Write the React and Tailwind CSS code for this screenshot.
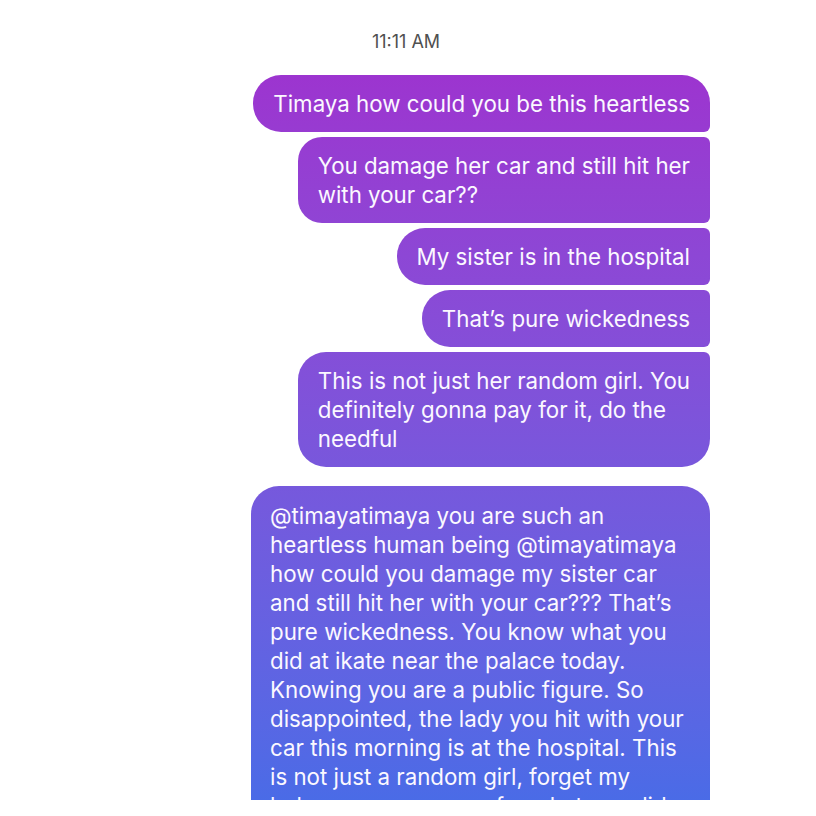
export default function App() {
  const bubble =
    "bg-fixed bg-linear-to-b from-[#a22acd] to-[#476ce7] text-[#fbf8ff] px-[20px] py-[14px] leading-[29px] whitespace-nowrap";

  return (
    <div
      className="w-[816px] h-[816px] bg-white overflow-hidden"
      style={{ fontFamily: "Inter, 'Noto Sans', sans-serif" }}
    >
      <div className="h-[800px] overflow-hidden">
        <div className="pt-[31px] pr-[4px] text-center text-[18px] leading-[22px] text-[#505050]">
          11:11 AM
        </div>

        <div className="flex flex-col items-end gap-[5px] pr-[106px] mt-[22px] text-[22.3px]">
          <div className={bubble + " rounded-[28px] rounded-br-[6px]"}>
            Timaya how could you be this heartless
          </div>
          <div className={bubble + " rounded-l-[24px] rounded-r-[6px]"}>
            You damage her car and still hit her
            <br />
            with your car??
          </div>
          <div className={bubble + " rounded-l-[28px] rounded-r-[6px]"}>
            My sister is in the hospital
          </div>
          <div className={bubble + " rounded-l-[28px] rounded-r-[6px]"}>
            That’s pure wickedness
          </div>
          <div className={bubble + " rounded-[28px] rounded-tr-[6px]"}>
            This is not just her random girl. You
            <br />
            definitely gonna pay for it, do the
            <br />
            needful
          </div>

          <div
            className={
              bubble + " mt-[14px] w-[459px] rounded-t-[28px] pl-[19px] pt-[15px] leading-[29.3px]"
            }
          >
            @timayatimaya you are such an
            <br />
            heartless human being @timayatimaya
            <br />
            how could you damage my sister car
            <br />
            and still hit her with your car??? That’s
            <br />
            pure wickedness. You know what you
            <br />
            did at ikate near the palace today.
            <br />
            Knowing you are a public figure. So
            <br />
            disappointed, the lady you hit with your
            <br />
            car this morning is at the hospital. This
            <br />
            is not just a random girl, forget my
            <br />
            baby, you gonna pay for what you did
          </div>
        </div>
      </div>
    </div>
  );
}
